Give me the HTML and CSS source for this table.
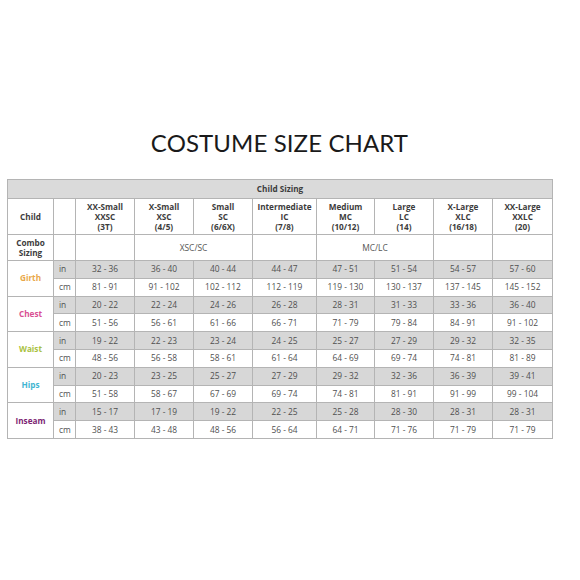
FILE: index.html
```html
<!DOCTYPE html>
<html>
<head>
<meta charset="utf-8">
<link rel="stylesheet" href="styles.css">
</head>
<body>
<div class="page">
  <div class="wrap">
  <h1 class="title">COSTUME SIZE CHART</h1>
  <table class="chart">
    <colgroup>
      <col class="c-label"><col class="c-unit">
      <col class="c-59"><col class="c-59"><col class="c-59"><col class="c-64">
      <col class="c-58"><col class="c-59"><col class="c-59"><col class="c-60">
    </colgroup>
    <tr class="r-head"><th colspan="10">Child Sizing</th></tr>
    <tr class="r-size">
      <th>Child</th><th></th>
      <th>XX-Small<br>XXSC<br>(3T)</th>
      <th>X-Small<br>XSC<br>(4/5)</th>
      <th>Small<br>SC<br>(6/6X)</th>
      <th>Intermediate<br>IC<br>(7/8)</th>
      <th>Medium<br>MC<br>(10/12)</th>
      <th>Large<br>LC<br>(14)</th>
      <th>X-Large<br>XLC<br>(16/18)</th>
      <th>XX-Large<br>XXLC<br>(20)</th>
    </tr>
    <tr class="r-combo">
      <th>Combo<br>Sizing</th><td></td><td></td>
      <td colspan="2">XSC/SC</td><td></td>
      <td colspan="2">MC/LC</td><td></td><td></td>
    </tr>
    <tr class="r-in"><th rowspan="2" class="lab girth">Girth</th><td class="u">in</td><td>32 - 36</td><td>36 - 40</td><td>40 - 44</td><td>44 - 47</td><td>47 - 51</td><td>51 - 54</td><td>54 - 57</td><td>57 - 60</td></tr>
    <tr class="r-cm"><td class="u">cm</td><td>81 - 91</td><td>91 - 102</td><td>102 - 112</td><td>112 - 119</td><td>119 - 130</td><td>130 - 137</td><td>137 - 145</td><td>145 - 152</td></tr>
    <tr class="r-in"><th rowspan="2" class="lab chest">Chest</th><td class="u">in</td><td>20 - 22</td><td>22 - 24</td><td>24 - 26</td><td>26 - 28</td><td>28 - 31</td><td>31 - 33</td><td>33 - 36</td><td>36 - 40</td></tr>
    <tr class="r-cm"><td class="u">cm</td><td>51 - 56</td><td>56 - 61</td><td>61 - 66</td><td>66 - 71</td><td>71 - 79</td><td>79 - 84</td><td>84 - 91</td><td>91 - 102</td></tr>
    <tr class="r-in"><th rowspan="2" class="lab waist">Waist</th><td class="u">in</td><td>19 - 22</td><td>22 - 23</td><td>23 - 24</td><td>24 - 25</td><td>25 - 27</td><td>27 - 29</td><td>29 - 32</td><td>32 - 35</td></tr>
    <tr class="r-cm"><td class="u">cm</td><td>48 - 56</td><td>56 - 58</td><td>58 - 61</td><td>61 - 64</td><td>64 - 69</td><td>69 - 74</td><td>74 - 81</td><td>81 - 89</td></tr>
    <tr class="r-in"><th rowspan="2" class="lab hips">Hips</th><td class="u">in</td><td>20 - 23</td><td>23 - 25</td><td>25 - 27</td><td>27 - 29</td><td>29 - 32</td><td>32 - 36</td><td>36 - 39</td><td>39 - 41</td></tr>
    <tr class="r-cm"><td class="u">cm</td><td>51 - 58</td><td>58 - 67</td><td>67 - 69</td><td>69 - 74</td><td>74 - 81</td><td>81 - 91</td><td>91 - 99</td><td>99 - 104</td></tr>
    <tr class="r-in"><th rowspan="2" class="lab inseam">Inseam</th><td class="u">in</td><td>15 - 17</td><td>17 - 19</td><td>19 - 22</td><td>22 - 25</td><td>25 - 28</td><td>28 - 30</td><td>28 - 31</td><td>28 - 31</td></tr>
    <tr class="r-cm"><td class="u">cm</td><td>38 - 43</td><td>43 - 48</td><td>48 - 56</td><td>56 - 64</td><td>64 - 71</td><td>71 - 76</td><td>71 - 79</td><td>71 - 79</td></tr>
  </table>
  </div>
</div>
</body>
</html>
```

FILE: styles.css
```css
html, body {
  margin: 0;
  padding: 0;
  background: #ffffff;
}

.page {
  width: 580px;
  height: 580px;
  padding-top: 128px;
  box-sizing: border-box;
}

.wrap {
  width: 545px;
  margin-left: 7px;
}

.title {
  margin: 0 0 21px 0;
  font-family: Lato, "Open Sans", sans-serif;
  font-weight: 400;
  font-size: 24px;
  line-height: 30px;
  color: #1a1a1a;
  text-align: center;
  letter-spacing: 0.1px;
}

.chart {
  width: 545px;
  border-collapse: collapse;
  table-layout: fixed;
  font-family: "Open Sans", "Noto Sans", sans-serif;
  font-size: 8.4px;
  color: #505050;
  border: 1px solid #b4b4b4;
}

.c-label { width: 46px; }
.c-unit { width: 22px; }
.c-58 { width: 58px; }
.c-59 { width: 59px; }
.c-60 { width: 60px; }
.c-64 { width: 64px; }

.chart th, .chart td {
  border: 1px solid #b4b4b4;
  padding: 0;
  text-align: center;
  vertical-align: middle;
}

.chart th {
  font-weight: 700;
  color: #3c3c3c;
  font-size: 8.2px;
  line-height: 10px;
}

.r-head th {
  height: 18px;
  background: #dadada;
}

.r-size th {
  height: 35px;
}

.r-combo th, .r-combo td {
  height: 25px;
}

.r-combo td {
  color: #555555;
}

.r-in td, .r-cm td {
  height: 16.8px;
  line-height: 10px;
}

.r-in td {
  background: #d7d7d7;
}

.r-cm td {
  background: #ffffff;
}

.chart td.u {
  text-align: left;
  padding-left: 5px;
}

.chart th.lab {
  background: #ffffff;
}

.chart th.girth { color: #e9a849; }
.chart th.chest { color: #d94f93; }
.chart th.waist { color: #a9c23f; }
.chart th.hips { color: #3fb6d2; }
.chart th.inseam { color: #7d1f73; }
```
